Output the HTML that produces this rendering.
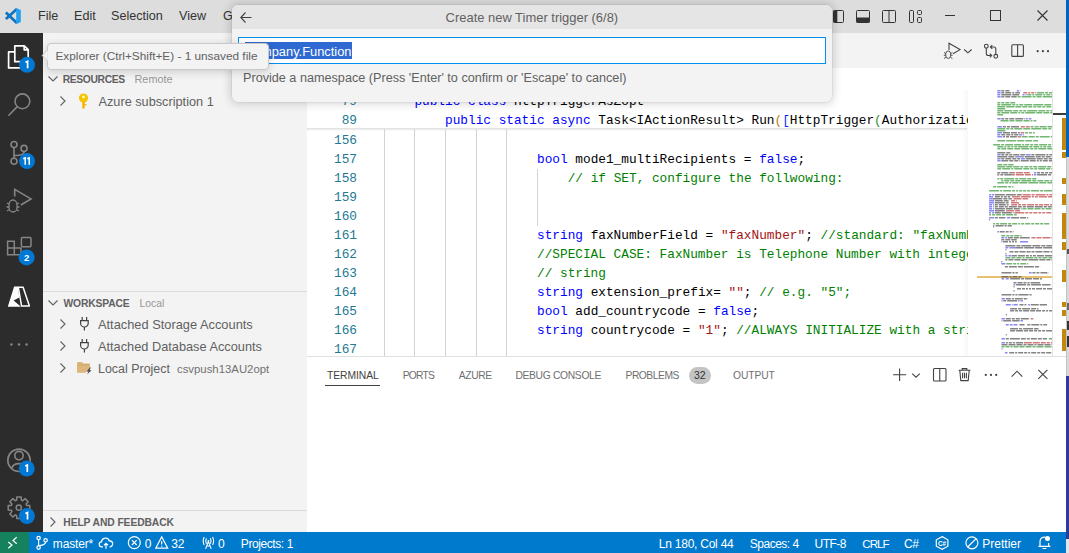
<!DOCTYPE html>
<html><head><meta charset="utf-8">
<style>
*{box-sizing:border-box;margin:0;padding:0}
html,body{width:1069px;height:553px;overflow:hidden;background:#c9c9c9;font-family:"Liberation Sans",sans-serif}
.a{position:absolute}
#win{position:absolute;left:0;top:0;width:1066px;height:553px;overflow:hidden;background:#fff}
#title{left:0;top:0;width:1066px;height:33px;background:#dddddd}
.menu{top:9px;font-size:12.6px;color:#333;white-space:pre}
#act{left:0;top:33px;width:43px;height:499px;background:#2c2c2c}
#side{left:43px;top:33px;width:264px;height:499px;background:#f3f3f3}
#edtitle{left:307px;top:33px;width:759px;height:35px;background:#f3f3f3}
#editor{left:307px;top:68px;width:759px;height:288px;background:#fff;overflow:hidden}
#panel{left:307px;top:356px;width:759px;height:176px;background:#fff;border-top:1px solid #e0e0e0}
#status{left:0;top:532px;width:1066px;height:21px;background:#007acc;color:#fff}
.code{position:absolute;font-family:"Liberation Mono",monospace;font-size:12.78px;white-space:pre;line-height:19px;height:19px;color:#000}
.ln{color:#237893;text-align:right;width:50px;left:0}
.k{color:#0000ff}.s{color:#a31515}.c{color:#008000}
.guide{position:absolute;width:1px;background:#d3d3d3}
.hdr{font-size:10.3px;font-weight:bold;color:#616161;white-space:pre}
.sub{font-size:10.4px;color:#979797;white-space:pre}
.item{font-size:12.78px;color:#616161;white-space:pre}
.badge{position:absolute;width:16px;height:16px;border-radius:8px;background:#0078d4;color:#fff;font-size:10px;font-weight:bold;text-align:center;line-height:16px;letter-spacing:-0.5px}
.tab{top:370px;font-size:10.3px;color:#6f6f6f;white-space:pre}
.st{top:4.7px;font-size:12px;color:#fff;white-space:pre}
svg{position:absolute;overflow:visible}
</style></head><body>
<!-- desktop strip on right -->
<div class="a" style="left:1066px;top:0;width:3px;height:157px;background:#0063c3"></div>
<div class="a" style="left:1066px;top:157px;width:3px;height:219px;background:#dadada;border-left:1px solid #c2c2c2"></div>
<div class="a" style="left:1067px;top:249px;width:2px;height:5px;background:#555"></div>
<div class="a" style="left:1067px;top:303px;width:2px;height:7px;background:#666"></div>
<div class="a" style="left:1067px;top:321px;width:2px;height:9px;background:#333"></div>
<div class="a" style="left:1067px;top:336px;width:2px;height:11px;background:#333"></div>
<div class="a" style="left:1066px;top:376px;width:3px;height:162.5px;background:#2e3a9e"></div>
<div class="a" style="left:1066px;top:538.5px;width:3px;height:14.5px;background:#e6e6e6"></div>
<div id="win">
 <!-- title bar -->
 <div id="title" class="a">
  <svg style="left:0;top:0" width="26" height="30">
   <path d="M5.9 12.6 L16.9 23.1 M16.9 8.9 L5.9 19" stroke="#0c75c2" stroke-width="2.7" fill="none"/>
   <path d="M16.2 7.9 L20.8 10 V22.1 L16.2 24.2 Z" fill="#23a0f0"/>
  </svg>
  <div class="a menu" style="left:38px">File</div>
  <div class="a menu" style="left:74px">Edit</div>
  <div class="a menu" style="left:111px">Selection</div>
  <div class="a menu" style="left:179px">View</div>
  <div class="a menu" style="left:223px">Go</div>
  <svg style="left:833px;top:10px" width="12" height="13"><rect x="0.5" y="0.5" width="10" height="12" rx="1" fill="none" stroke="#333"/><rect x="0.5" y="0.5" width="3.8" height="12" fill="#333"/></svg>
  <svg style="left:856px;top:10px" width="14" height="13"><rect x="0.5" y="0.5" width="13" height="12" rx="1" fill="none" stroke="#333"/><rect x="0.5" y="7.5" width="13" height="5" fill="#333"/></svg>
  <svg style="left:882px;top:10px" width="14" height="13"><rect x="0.5" y="0.5" width="13" height="12" rx="1" fill="none" stroke="#333"/><line x1="7" y1="0.5" x2="7" y2="12.5" stroke="#333"/></svg>
  <svg style="left:909px;top:10px" width="14" height="13"><rect x="0.5" y="0.5" width="4" height="12" rx="1" fill="none" stroke="#333"/><rect x="8.5" y="0.5" width="4" height="4" rx="1" fill="none" stroke="#333"/><rect x="8.5" y="7.5" width="4" height="5" rx="1" fill="none" stroke="#333"/></svg>
  <svg style="left:945px;top:15px" width="10" height="2"><line x1="0" y1="0.5" x2="10" y2="0.5" stroke="#333"/></svg>
  <svg style="left:990px;top:10px" width="11" height="11"><rect x="0.5" y="0.5" width="10" height="10" fill="none" stroke="#333"/></svg>
  <svg style="left:1037px;top:10px" width="11" height="11"><path d="M0.5 0.5 L10.5 10.5 M10.5 0.5 L0.5 10.5" stroke="#333" stroke-width="1.1"/></svg>
 </div>

 <!-- activity bar -->
 <div id="act" class="a"></div>
 <svg style="left:0;top:0" width="43" height="553">
  <g fill="none" stroke="#fff" stroke-width="1.7" stroke-linejoin="round">
   <path d="M14.8 45.8 H24.3 L28.2 49.7 V61.7 H14.8 Z"/>
   <path d="M24.2 45.8 V49.8 H28.2"/>
   <path d="M14.5 51.9 H8.6 V67.9 H22"/>
  </g>
  <g fill="none" stroke="#858585" stroke-width="1.6">
   <circle cx="22.4" cy="101.3" r="7.4"/>
   <path d="M17.2 106.6 L8.4 115.8"/>
   <circle cx="14" cy="144.5" r="3"/>
   <circle cx="14" cy="161.2" r="3"/>
   <circle cx="24" cy="148.4" r="3"/>
   <path d="M14 147.5 V158.2 M24 151.4 C24 155 21 155.3 14 155.6"/>
   <path d="M14.7 196.5 V189.4 L31 198.9 L20.8 205"/>
   <path d="M9 204.5 a4 4.5 0 0 1 8 0 v3 a4 4.5 0 0 1 -8 0 z M7 203 l2.5 1.5 M19 203 l-2.5 1.5 M6.5 207 h2.5 M17 207 h2.5 M7 211 l2.5 -1.5 M19 211 l-2.5 -1.5" stroke-width="1.3"/>
   <path d="M7.6 241.3 H14.3 V254.8 H7.6 Z M7.6 248 H21 V254.8 H14.3" stroke-width="1.5"/>
   <rect x="21.4" y="237.4" width="9.6" height="9.4" rx="1" stroke-width="1.5"/>
   <circle cx="19" cy="460.3" r="11.2"/>
   <circle cx="19" cy="455.6" r="4.2"/>
   <path d="M11.4 468.5 C12.8 464.8 15.5 463.6 19 463.6 C22.5 463.6 25.2 464.8 26.6 468.5"/>
  </g>
  <path fill="#fff" d="M14.1 286.6 H17.9 L19.3 297.6 L13.6 300.5 L21 306.8 H7.8 Z"/><path fill="none" stroke="#fff" stroke-width="1.5" stroke-linejoin="round" d="M18.3 287.3 H23.1 L29.4 306.1 H21.6 Z"/>
  <g fill="#858585"><circle cx="11.4" cy="344.5" r="1.3"/><circle cx="19" cy="344.5" r="1.3"/><circle cx="26.6" cy="344.5" r="1.3"/></g>
  <path fill="none" stroke="#858585" stroke-width="1.5" stroke-linejoin="round" d="M16.64 500.16 L16.81 497.02 L21.19 497.02 L21.36 500.16 L22.73 500.72 L25.08 498.63 L28.17 501.72 L26.08 504.07 L26.64 505.44 L29.78 505.61 L29.78 509.99 L26.64 510.16 L26.08 511.53 L28.17 513.88 L25.08 516.97 L22.73 514.88 L21.36 515.44 L21.19 518.58 L16.81 518.58 L16.64 515.44 L15.27 514.88 L12.92 516.97 L9.83 513.88 L11.92 511.53 L11.36 510.16 L8.22 509.99 L8.22 505.61 L11.36 505.44 L11.92 504.07 L9.83 501.72 L12.92 498.63 L15.27 500.72 Z"/>
  <circle cx="18.8" cy="507.7" r="2.6" fill="none" stroke="#858585" stroke-width="1.5"/>
 </svg>
 <svg style="left:0;top:0" width="43" height="553">
  <g fill="#0078d4"><circle cx="27" cy="64.8" r="8"/><circle cx="27" cy="161.1" r="8"/><circle cx="26.6" cy="257.4" r="8"/><circle cx="26.7" cy="468.5" r="8"/><circle cx="26.9" cy="516" r="8"/></g>
  <g fill="none" stroke="#fff" stroke-width="1.7">
   <path d="M25.5 62.2 L27.6 61.3 V68.3"/>
   <path d="M23.2 158.7 L25.2 157.8 V164.8 M27.2 158.7 L29.2 157.8 V164.8" stroke-width="1.5"/>
   <path d="M25.2 466 L27.3 465.1 V472.1"/>
   <path d="M25.4 513.5 L27.5 512.6 V519.6"/>
  </g>
  <text x="26.6" y="260.8" font-size="9.6" font-weight="bold" fill="#fff" text-anchor="middle" font-family="Liberation Sans">2</text>
 </svg>
 <!-- sidebar -->
 <div id="side" class="a">
  <svg style="left:5.3px;top:43.2px" width="11" height="6"><path d="M0.5 0.5 L5 5 L9.5 0.5" fill="none" stroke="#616161" stroke-width="1.1"/></svg>
  <div class="a hdr" style="left:19.8px;top:41px;letter-spacing:-0.37px">RESOURCES</div>
  <div class="a sub" style="left:91.5px;top:39.8px;font-size:10.9px">Remote</div>
  <svg style="left:17px;top:63.3px" width="6" height="10"><path d="M0.5 0.5 L5 5 L0.5 9.5" fill="none" stroke="#616161" stroke-width="1.1"/></svg>
  <svg style="left:35px;top:59.5px" width="11" height="16" viewBox="0 0 11 16"><circle cx="5.5" cy="5" r="4.6" fill="#f5c400"/><circle cx="5.5" cy="4" r="1.4" fill="#fff6c0"/><path d="M4.3 8.5 H6.7 V15 L5.5 16 L4.3 15 Z" fill="#f5b000"/><rect x="6.5" y="11" width="2" height="1.3" fill="#f5b000"/></svg>
  <div class="a item" style="left:55.5px;top:61px;font-size:12.73px">Azure subscription 1</div>

  <div class="a" style="left:0;top:258px;width:264px;height:1px;background:#dcdcdc"></div>
  <svg style="left:5.3px;top:267.2px" width="11" height="6"><path d="M0.5 0.5 L5 5 L9.5 0.5" fill="none" stroke="#616161" stroke-width="1.1"/></svg>
  <div class="a hdr" style="left:20.5px;top:264.8px;letter-spacing:-0.15px">WORKSPACE</div>
  <div class="a sub" style="left:96.5px;top:264.8px">Local</div>
  <svg style="left:17px;top:285.7px" width="6" height="10"><path d="M0.5 0.5 L5 5 L0.5 9.5" fill="none" stroke="#616161" stroke-width="1.1"/></svg>
  <svg style="left:36.7px;top:284px" width="9" height="14"><path d="M2.2 0 V3.6 M6.6 0 V3.6 M0.6 3.6 H8.2 V6.2 A3.8 3.8 0 0 1 0.6 6.2 Z M4.4 10 V13.5" fill="none" stroke="#424242" stroke-width="1.2"/></svg>
  <div class="a item" style="left:55px;top:284px;font-size:12.83px">Attached Storage Accounts</div>
  <svg style="left:17px;top:307.7px" width="6" height="10"><path d="M0.5 0.5 L5 5 L0.5 9.5" fill="none" stroke="#616161" stroke-width="1.1"/></svg>
  <svg style="left:36.7px;top:306px" width="9" height="14"><path d="M2.2 0 V3.6 M6.6 0 V3.6 M0.6 3.6 H8.2 V6.2 A3.8 3.8 0 0 1 0.6 6.2 Z M4.4 10 V13.5" fill="none" stroke="#424242" stroke-width="1.2"/></svg>
  <div class="a item" style="left:55px;top:306px;font-size:12.78px">Attached Database Accounts</div>
  <svg style="left:17px;top:329.7px" width="6" height="10"><path d="M0.5 0.5 L5 5 L0.5 9.5" fill="none" stroke="#616161" stroke-width="1.1"/></svg>
  <svg style="left:33.8px;top:329.1px" width="16" height="14"><path d="M0 0.9 Q0 0 0.9 0 H5 L6.4 1.4 H12.1 Q13 1.4 13 2.3 V5.8 L8.6 10.7 H0 Z" fill="#dcb67a"/><path d="M0.3 2.9 H12.7" stroke="#c8a265" stroke-width="0.7"/><path d="M12.9 5.6 L9.6 9.5 H11.7 L10.1 12.6 L14.5 8.2 H12.3 L13.9 5.6 Z" fill="#3c3c3c"/></svg>
  <div class="a item" style="left:55px;top:328.7px;font-size:12.44px">Local Project</div>
  <div class="a" style="left:134px;top:329.7px;font-size:11.36px;color:#717171;white-space:pre">csvpush13AU2opt</div>

  <div class="a" style="left:0;top:477px;width:264px;height:1px;background:#dcdcdc"></div>
  <svg style="left:7px;top:483.6px" width="6" height="10"><path d="M0.5 0.5 L5 5 L0.5 9.5" fill="none" stroke="#616161" stroke-width="1.1"/></svg>
  <div class="a hdr" style="left:20.3px;top:484px;letter-spacing:-0.09px">HELP AND FEEDBACK</div>
 </div>

 <!-- editor title -->
 <div id="edtitle" class="a">
  <svg style="left:0;top:0" width="759" height="35">
   <g fill="none" stroke="#424242" stroke-width="1.1" transform="translate(-307,-33)">
    <path d="M949 50 V43.3 L960 49.6 L953 53.8"/>
    <path d="M945.8 53.6 a2.4 2.6 0 0 1 4.8 0 v2.2 a2.4 2.6 0 0 1 -4.8 0 z M944 52.5 l1.8 1.2 M952.4 52.5 l-1.8 1.2 M943.8 55.3 h2 M950.6 55.3 h2 M944 58.5 l1.8 -1.2 M952.4 58.5 l-1.8 -1.2" stroke-width="0.9"/>
    <path d="M964.2 49.5 L967.9 52.8 L971.6 49.5"/>
    <circle cx="986.3" cy="46.2" r="1.9"/><circle cx="995.8" cy="56.3" r="1.9"/>
    <path d="M986.3 48.1 V53.5 Q986.3 55.5 988.3 55.5 H991.5 M989.8 53.6 L991.7 55.5 L989.8 57.4"/>
    <path d="M995.8 54.4 V49 Q995.8 47 993.8 47 H990.6 M992.3 45.1 L990.4 47 L992.3 48.9"/>
    <rect x="1011.8" y="44.8" width="11.6" height="11.6" rx="1"/><path d="M1017.6 44.8 V56.4"/>
   </g>
   <g fill="#424242"><circle cx="730.7" cy="18.2" r="1.1"/><circle cx="735.9" cy="18.2" r="1.1"/><circle cx="741" cy="18.2" r="1.1"/></g>
  </svg>
 </div>

 <!-- editor -->
 <div id="editor" class="a">
  <div class="a" style="left:0;top:0;width:660.5px;height:288px;overflow:hidden">
   <!-- guides -->
   <div class="guide" style="left:76.5px;top:61px;height:227px"></div>
   <div class="guide" style="left:107.2px;top:61px;height:227px"></div>
   <div class="guide" style="left:137.8px;top:61px;height:227px"></div>
   <div class="guide" style="left:168.5px;top:61px;height:227px"></div>
   <div class="guide" style="left:199.2px;top:61px;height:227px"></div>
   <div class="guide" style="left:229.9px;top:101px;height:57px"></div>

   <div class="code ln" style="top:63px">156</div>
   <div class="code ln" style="top:82px">157</div>
   <div class="code ln" style="top:101px">158</div>
   <div class="code ln" style="top:120px">159</div>
   <div class="code ln" style="top:139px">160</div>
   <div class="code ln" style="top:158px">161</div>
   <div class="code ln" style="top:177px">162</div>
   <div class="code ln" style="top:196px">163</div>
   <div class="code ln" style="top:215px">164</div>
   <div class="code ln" style="top:234px">165</div>
   <div class="code ln" style="top:253px">166</div>
   <div class="code ln" style="top:272px">167</div>

   <div class="code" style="left:230px;top:82px"><span class="k">bool</span> mode1_multiRecipients = <span class="k">false</span>;</div>
   <div class="code c" style="left:260.7px;top:101px">// if SET, configure the follwowing:</div>
   <div class="code" style="left:230px;top:158px"><span class="k">string</span> faxNumberField = <span class="s">"faxNumber"</span>; <span class="c">//standard: "faxNumber"</span></div>
   <div class="code c" style="left:230px;top:177px">//SPECIAL CASE: FaxNumber is Telephone Number with integer</div>
   <div class="code c" style="left:230px;top:196px">// string</div>
   <div class="code" style="left:230px;top:215px"><span class="k">string</span> extension_prefix= <span class="s">""</span>; <span class="c">// e.g. "5";</span></div>
   <div class="code" style="left:230px;top:234px"><span class="k">bool</span> add_countrycode = <span class="k">false</span>;</div>
   <div class="code" style="left:230px;top:253px"><span class="k">string</span> countrycode = <span class="s">"1"</span>; <span class="c">//ALWAYS INITIALIZE with a string</span></div>

   <!-- sticky scroll -->
   <div class="a" style="left:0;top:22px;width:660px;height:38px;background:#fff"></div>
   <div class="a" style="left:0;top:60px;width:660px;height:3px;background:linear-gradient(#dddddd,rgba(221,221,221,0))"></div>
   <div class="code ln" style="top:24px">79</div>
   <div class="code ln" style="top:43px">89</div>
   <div class="code" style="left:107.4px;top:24px"><span class="k">public</span> <span class="k">class</span> HttpTriggerAsZopt</div>
   <div class="code" style="left:138px;top:43px"><span class="k">public</span> <span class="k">static</span> <span class="k">async</span> Task&lt;IActionResult&gt; Run<span style="color:#b8860b">(</span><span style="color:#0431fa">[</span>HttpTrigger<span style="color:#319331">(</span>Authorization</div>
  </div>
  <!-- minimap -->
  <div class="a" style="left:654.5px;top:22px;width:6px;height:266px;background:linear-gradient(90deg,rgba(0,0,0,0),rgba(0,0,0,0.03))"></div>
  <div class="a" style="left:660.5px;top:0;width:85px;height:288px;background:#fff;overflow:hidden">
  <svg style="left:0;top:0" width="86" height="288"><rect x="9" y="208" width="76" height="2" fill="#e8c070"/><g opacity="0.72"><rect x="29.3" y="22" width="3.3" height="1.5" fill="#5c5cf5"/><rect x="33.3" y="22" width="3.0" height="1.5" fill="#555555"/><rect x="37.3" y="22" width="4.1" height="1.5" fill="#555555"/><rect x="48.8" y="22" width="2.0" height="1.5" fill="#5c5cf5"/><rect x="51.8" y="22" width="0.6" height="1.5" fill="#5c5cf5"/><rect x="29.3" y="24" width="3.3" height="1.5" fill="#5c5cf5"/><rect x="33.3" y="24" width="3.0" height="1.5" fill="#555555"/><rect x="37.3" y="24" width="6.0" height="1.5" fill="#555555"/><rect x="44.3" y="24" width="2.0" height="1.5" fill="#555555"/><rect x="47.3" y="24" width="4.7" height="1.5" fill="#555555"/><rect x="55.3" y="24" width="4.0" height="1.5" fill="#c04848"/><rect x="60.3" y="24" width="2.0" height="1.5" fill="#c04848"/><rect x="63.3" y="24" width="3.0" height="1.5" fill="#c04848"/><rect x="67.3" y="24" width="1.0" height="1.5" fill="#c04848"/><rect x="69.1" y="24" width="7.0" height="1.5" fill="#3f9a3f"/><rect x="77.1" y="24" width="3.0" height="1.5" fill="#3f9a3f"/><rect x="81.1" y="24" width="3.4" height="1.5" fill="#3f9a3f"/><rect x="29.3" y="26" width="3.0" height="1.5" fill="#5c5cf5"/><rect x="33.3" y="26" width="10.0" height="1.5" fill="#555555"/><rect x="44.3" y="26" width="7.0" height="1.5" fill="#555555"/><rect x="54.5" y="26" width="2.0" height="1.5" fill="#5c5cf5"/><rect x="57.5" y="26" width="1.1" height="1.5" fill="#5c5cf5"/><rect x="59.3" y="26" width="4.0" height="1.5" fill="#3f9a3f"/><rect x="64.3" y="26" width="2.0" height="1.5" fill="#3f9a3f"/><rect x="67.3" y="26" width="7.0" height="1.5" fill="#3f9a3f"/><rect x="75.3" y="26" width="2.0" height="1.5" fill="#3f9a3f"/><rect x="78.3" y="26" width="4.0" height="1.5" fill="#3f9a3f"/><rect x="83.3" y="26" width="1.2" height="1.5" fill="#3f9a3f"/><rect x="29.3" y="28" width="3.3" height="1.5" fill="#5c5cf5"/><rect x="33.3" y="28" width="3.0" height="1.5" fill="#555555"/><rect x="37.3" y="28" width="5.0" height="1.5" fill="#555555"/><rect x="43.3" y="28" width="5.4" height="1.5" fill="#555555"/><rect x="49.6" y="28" width="3.0" height="1.5" fill="#3f9a3f"/><rect x="53.6" y="28" width="10.0" height="1.5" fill="#3f9a3f"/><rect x="64.6" y="28" width="3.0" height="1.5" fill="#3f9a3f"/><rect x="68.6" y="28" width="5.0" height="1.5" fill="#3f9a3f"/><rect x="74.6" y="28" width="10.0" height="1.5" fill="#3f9a3f"/><rect x="29.3" y="34" width="3.0" height="1.5" fill="#3f9a3f"/><rect x="33.3" y="34" width="3.0" height="1.5" fill="#3f9a3f"/><rect x="37.3" y="34" width="4.0" height="1.5" fill="#3f9a3f"/><rect x="42.3" y="34" width="4.9" height="1.5" fill="#3f9a3f"/><rect x="29.3" y="36" width="3.0" height="1.5" fill="#3f9a3f"/><rect x="33.3" y="36" width="10.0" height="1.5" fill="#3f9a3f"/><rect x="44.3" y="36" width="3.0" height="1.5" fill="#3f9a3f"/><rect x="48.3" y="36" width="2.0" height="1.5" fill="#3f9a3f"/><rect x="51.3" y="36" width="4.0" height="1.5" fill="#3f9a3f"/><rect x="56.3" y="36" width="8.0" height="1.5" fill="#3f9a3f"/><rect x="65.3" y="36" width="10.0" height="1.5" fill="#3f9a3f"/><rect x="76.3" y="36" width="7.0" height="1.5" fill="#3f9a3f"/><rect x="84.3" y="36" width="0.3" height="1.5" fill="#3f9a3f"/><rect x="29.3" y="38" width="8.0" height="1.5" fill="#3f9a3f"/><rect x="38.3" y="38" width="8.0" height="1.5" fill="#3f9a3f"/><rect x="47.3" y="38" width="6.0" height="1.5" fill="#3f9a3f"/><rect x="54.3" y="38" width="5.0" height="1.5" fill="#3f9a3f"/><rect x="60.3" y="38" width="4.0" height="1.5" fill="#3f9a3f"/><rect x="65.3" y="38" width="3.0" height="1.5" fill="#3f9a3f"/><rect x="69.3" y="38" width="4.0" height="1.5" fill="#3f9a3f"/><rect x="74.3" y="38" width="3.0" height="1.5" fill="#3f9a3f"/><rect x="78.3" y="38" width="5.0" height="1.5" fill="#3f9a3f"/><rect x="84.3" y="38" width="0.3" height="1.5" fill="#3f9a3f"/><rect x="29.3" y="40" width="8.0" height="1.5" fill="#3f9a3f"/><rect x="29.3" y="42" width="6.0" height="1.5" fill="#3f9a3f"/><rect x="36.3" y="42" width="8.0" height="1.5" fill="#3f9a3f"/><rect x="45.3" y="42" width="5.0" height="1.5" fill="#3f9a3f"/><rect x="51.3" y="42" width="3.0" height="1.5" fill="#3f9a3f"/><rect x="55.3" y="42" width="3.0" height="1.5" fill="#3f9a3f"/><rect x="59.3" y="42" width="10.0" height="1.5" fill="#3f9a3f"/><rect x="70.3" y="42" width="7.0" height="1.5" fill="#3f9a3f"/><rect x="78.3" y="42" width="3.0" height="1.5" fill="#3f9a3f"/><rect x="82.3" y="42" width="2.3" height="1.5" fill="#3f9a3f"/><rect x="29.3" y="44" width="3.0" height="1.5" fill="#3f9a3f"/><rect x="33.3" y="44" width="8.0" height="1.5" fill="#3f9a3f"/><rect x="42.3" y="44" width="7.0" height="1.5" fill="#3f9a3f"/><rect x="50.3" y="44" width="2.0" height="1.5" fill="#3f9a3f"/><rect x="53.3" y="44" width="3.0" height="1.5" fill="#3f9a3f"/><rect x="57.3" y="44" width="10.0" height="1.5" fill="#3f9a3f"/><rect x="68.3" y="44" width="6.0" height="1.5" fill="#3f9a3f"/><rect x="75.3" y="44" width="6.0" height="1.5" fill="#3f9a3f"/><rect x="82.3" y="44" width="2.3" height="1.5" fill="#3f9a3f"/><rect x="29.3" y="46" width="5.7" height="1.5" fill="#3f9a3f"/><rect x="29.3" y="50" width="3.3" height="1.5" fill="#5c5cf5"/><rect x="33.3" y="50" width="3.0" height="1.5" fill="#555555"/><rect x="37.3" y="50" width="3.0" height="1.5" fill="#555555"/><rect x="41.3" y="50" width="5.0" height="1.5" fill="#555555"/><rect x="47.3" y="50" width="8.0" height="1.5" fill="#555555"/><rect x="56.3" y="50" width="0.6" height="1.5" fill="#555555"/><rect x="57.7" y="50" width="2.0" height="1.5" fill="#5c5cf5"/><rect x="60.7" y="50" width="2.7" height="1.5" fill="#5c5cf5"/><rect x="32.5" y="52" width="8.0" height="1.5" fill="#3f9a3f"/><rect x="41.5" y="52" width="5.0" height="1.5" fill="#3f9a3f"/><rect x="47.5" y="52" width="7.0" height="1.5" fill="#3f9a3f"/><rect x="55.5" y="52" width="6.0" height="1.5" fill="#3f9a3f"/><rect x="62.5" y="52" width="2.0" height="1.5" fill="#3f9a3f"/><rect x="65.5" y="52" width="2.8" height="1.5" fill="#3f9a3f"/><rect x="29.3" y="58" width="4.9" height="1.5" fill="#5c5cf5"/><rect x="35.0" y="58" width="3.0" height="1.5" fill="#555555"/><rect x="39.0" y="58" width="3.0" height="1.5" fill="#555555"/><rect x="43.0" y="58" width="8.0" height="1.5" fill="#555555"/><rect x="52.0" y="58" width="0.1" height="1.5" fill="#555555"/><rect x="52.8" y="58" width="4.0" height="1.5" fill="#c04848"/><rect x="57.8" y="58" width="3.9" height="1.5" fill="#c04848"/><rect x="62.6" y="58" width="3.0" height="1.5" fill="#3f9a3f"/><rect x="66.6" y="58" width="4.0" height="1.5" fill="#3f9a3f"/><rect x="71.6" y="58" width="7.0" height="1.5" fill="#3f9a3f"/><rect x="79.6" y="58" width="5.0" height="1.5" fill="#3f9a3f"/><rect x="29.3" y="60" width="8.0" height="1.5" fill="#3f9a3f"/><rect x="38.3" y="60" width="3.0" height="1.5" fill="#3f9a3f"/><rect x="42.3" y="60" width="3.0" height="1.5" fill="#3f9a3f"/><rect x="46.3" y="60" width="8.0" height="1.5" fill="#3f9a3f"/><rect x="55.3" y="60" width="7.0" height="1.5" fill="#3f9a3f"/><rect x="63.3" y="60" width="10.0" height="1.5" fill="#3f9a3f"/><rect x="74.3" y="60" width="5.0" height="1.5" fill="#3f9a3f"/><rect x="80.3" y="60" width="3.0" height="1.5" fill="#3f9a3f"/><rect x="84.3" y="60" width="0.3" height="1.5" fill="#3f9a3f"/><rect x="29.3" y="62" width="8.1" height="1.5" fill="#3f9a3f"/><rect x="29.3" y="64" width="4.9" height="1.5" fill="#5c5cf5"/><rect x="35.0" y="64" width="7.0" height="1.5" fill="#555555"/><rect x="43.0" y="64" width="6.0" height="1.5" fill="#555555"/><rect x="50.0" y="64" width="2.1" height="1.5" fill="#555555"/><rect x="52.8" y="64" width="3.3" height="1.5" fill="#c04848"/><rect x="56.9" y="64" width="3.0" height="1.5" fill="#3f9a3f"/><rect x="60.9" y="64" width="3.0" height="1.5" fill="#3f9a3f"/><rect x="64.9" y="64" width="1.8" height="1.5" fill="#3f9a3f"/><rect x="29.3" y="66" width="3.0" height="1.5" fill="#5c5cf5"/><rect x="33.3" y="66" width="4.0" height="1.5" fill="#555555"/><rect x="38.3" y="66" width="4.0" height="1.5" fill="#555555"/><rect x="43.3" y="66" width="2.0" height="1.5" fill="#555555"/><rect x="46.3" y="66" width="4.1" height="1.5" fill="#555555"/><rect x="51.2" y="66" width="3.0" height="1.5" fill="#5c5cf5"/><rect x="55.2" y="66" width="0.9" height="1.5" fill="#5c5cf5"/><rect x="29.3" y="68" width="4.9" height="1.5" fill="#5c5cf5"/><rect x="35.0" y="68" width="2.0" height="1.5" fill="#555555"/><rect x="38.0" y="68" width="3.0" height="1.5" fill="#555555"/><rect x="42.0" y="68" width="6.8" height="1.5" fill="#555555"/><rect x="49.6" y="68" width="3.3" height="1.5" fill="#c04848"/><rect x="53.7" y="68" width="6.0" height="1.5" fill="#3f9a3f"/><rect x="60.7" y="68" width="6.0" height="1.5" fill="#3f9a3f"/><rect x="67.7" y="68" width="3.0" height="1.5" fill="#3f9a3f"/><rect x="71.7" y="68" width="10.0" height="1.5" fill="#3f9a3f"/><rect x="82.7" y="68" width="1.9" height="1.5" fill="#3f9a3f"/><rect x="29.3" y="72" width="8.0" height="1.5" fill="#3f9a3f"/><rect x="38.3" y="72" width="10.0" height="1.5" fill="#3f9a3f"/><rect x="49.3" y="72" width="7.0" height="1.5" fill="#3f9a3f"/><rect x="57.3" y="72" width="7.0" height="1.5" fill="#3f9a3f"/><rect x="65.3" y="72" width="4.7" height="1.5" fill="#3f9a3f"/><rect x="25.2" y="76" width="7.0" height="1.5" fill="#3f9a3f"/><rect x="33.2" y="76" width="3.0" height="1.5" fill="#3f9a3f"/><rect x="37.2" y="76" width="8.0" height="1.5" fill="#3f9a3f"/><rect x="46.2" y="76" width="7.0" height="1.5" fill="#3f9a3f"/><rect x="54.2" y="76" width="2.0" height="1.5" fill="#3f9a3f"/><rect x="57.2" y="76" width="4.0" height="1.5" fill="#3f9a3f"/><rect x="62.2" y="76" width="3.0" height="1.5" fill="#3f9a3f"/><rect x="66.2" y="76" width="4.0" height="1.5" fill="#3f9a3f"/><rect x="71.2" y="76" width="8.0" height="1.5" fill="#3f9a3f"/><rect x="80.2" y="76" width="3.0" height="1.5" fill="#3f9a3f"/><rect x="84.2" y="76" width="0.3" height="1.5" fill="#3f9a3f"/><rect x="29.3" y="78" width="6.0" height="1.5" fill="#3f9a3f"/><rect x="36.3" y="78" width="2.0" height="1.5" fill="#3f9a3f"/><rect x="39.3" y="78" width="3.0" height="1.5" fill="#3f9a3f"/><rect x="43.3" y="78" width="2.0" height="1.5" fill="#3f9a3f"/><rect x="46.3" y="78" width="3.0" height="1.5" fill="#3f9a3f"/><rect x="50.3" y="78" width="10.0" height="1.5" fill="#3f9a3f"/><rect x="61.3" y="78" width="3.0" height="1.5" fill="#3f9a3f"/><rect x="65.3" y="78" width="6.0" height="1.5" fill="#3f9a3f"/><rect x="72.3" y="78" width="2.0" height="1.5" fill="#3f9a3f"/><rect x="75.3" y="78" width="3.0" height="1.5" fill="#3f9a3f"/><rect x="79.3" y="78" width="4.0" height="1.5" fill="#3f9a3f"/><rect x="84.3" y="78" width="0.3" height="1.5" fill="#3f9a3f"/><rect x="29.3" y="80" width="3.0" height="1.5" fill="#3f9a3f"/><rect x="33.3" y="80" width="5.0" height="1.5" fill="#3f9a3f"/><rect x="39.3" y="80" width="6.0" height="1.5" fill="#3f9a3f"/><rect x="46.3" y="80" width="6.0" height="1.5" fill="#3f9a3f"/><rect x="53.3" y="80" width="8.0" height="1.5" fill="#3f9a3f"/><rect x="62.3" y="80" width="3.0" height="1.5" fill="#3f9a3f"/><rect x="66.3" y="80" width="3.0" height="1.5" fill="#3f9a3f"/><rect x="70.3" y="80" width="8.0" height="1.5" fill="#3f9a3f"/><rect x="79.3" y="80" width="5.3" height="1.5" fill="#3f9a3f"/><rect x="29.3" y="84" width="8.0" height="1.5" fill="#555555"/><rect x="38.3" y="84" width="4.0" height="1.5" fill="#555555"/><rect x="29.3" y="86" width="3.3" height="1.5" fill="#5c5cf5"/><rect x="33.3" y="86" width="3.0" height="1.5" fill="#555555"/><rect x="37.3" y="86" width="3.0" height="1.5" fill="#555555"/><rect x="41.3" y="86" width="3.0" height="1.5" fill="#555555"/><rect x="45.3" y="86" width="6.0" height="1.5" fill="#555555"/><rect x="52.3" y="86" width="4.6" height="1.5" fill="#555555"/><rect x="57.7" y="86" width="4.9" height="1.5" fill="#5c5cf5"/><rect x="63.4" y="86" width="3.0" height="1.5" fill="#555555"/><rect x="67.4" y="86" width="10.0" height="1.5" fill="#555555"/><rect x="78.4" y="86" width="2.0" height="1.5" fill="#555555"/><rect x="81.4" y="86" width="3.1" height="1.5" fill="#555555"/><rect x="29.3" y="88" width="10.0" height="1.5" fill="#555555"/><rect x="40.3" y="88" width="6.0" height="1.5" fill="#555555"/><rect x="47.3" y="88" width="1.5" height="1.5" fill="#555555"/><rect x="48.8" y="88" width="4.9" height="1.5" fill="#5c5cf5"/><rect x="53.7" y="88" width="2.0" height="1.5" fill="#555555"/><rect x="56.7" y="88" width="10.0" height="1.5" fill="#555555"/><rect x="67.7" y="88" width="5.0" height="1.5" fill="#555555"/><rect x="73.7" y="88" width="3.0" height="1.5" fill="#555555"/><rect x="77.7" y="88" width="5.0" height="1.5" fill="#555555"/><rect x="83.7" y="88" width="0.9" height="1.5" fill="#555555"/><rect x="29.3" y="90" width="3.3" height="1.5" fill="#5c5cf5"/><rect x="33.3" y="90" width="3.0" height="1.5" fill="#555555"/><rect x="37.3" y="90" width="6.0" height="1.5" fill="#555555"/><rect x="44.3" y="90" width="4.0" height="1.5" fill="#555555"/><rect x="49.3" y="90" width="2.7" height="1.5" fill="#555555"/><rect x="52.8" y="90" width="4.1" height="1.5" fill="#5c5cf5"/><rect x="57.7" y="90" width="10.0" height="1.5" fill="#555555"/><rect x="68.7" y="90" width="6.0" height="1.5" fill="#555555"/><rect x="75.7" y="90" width="4.0" height="1.5" fill="#555555"/><rect x="80.7" y="90" width="3.8" height="1.5" fill="#555555"/><rect x="29.3" y="92" width="3.3" height="1.5" fill="#5c5cf5"/><rect x="33.3" y="92" width="7.0" height="1.5" fill="#555555"/><rect x="41.3" y="92" width="4.0" height="1.5" fill="#555555"/><rect x="46.3" y="92" width="4.0" height="1.5" fill="#555555"/><rect x="51.3" y="92" width="0.7" height="1.5" fill="#555555"/><rect x="52.8" y="92" width="8.0" height="1.5" fill="#555555"/><rect x="61.8" y="92" width="6.0" height="1.5" fill="#555555"/><rect x="68.8" y="92" width="2.0" height="1.5" fill="#555555"/><rect x="71.8" y="92" width="2.0" height="1.5" fill="#555555"/><rect x="74.8" y="92" width="5.0" height="1.5" fill="#555555"/><rect x="80.8" y="92" width="3.7" height="1.5" fill="#555555"/><rect x="29.3" y="96" width="5.0" height="1.5" fill="#3f9a3f"/><rect x="35.3" y="96" width="4.0" height="1.5" fill="#3f9a3f"/><rect x="40.3" y="96" width="5.3" height="1.5" fill="#3f9a3f"/><rect x="29.3" y="98" width="8.0" height="1.5" fill="#3f9a3f"/><rect x="38.3" y="98" width="6.0" height="1.5" fill="#3f9a3f"/><rect x="45.3" y="98" width="6.0" height="1.5" fill="#3f9a3f"/><rect x="52.3" y="98" width="3.0" height="1.5" fill="#3f9a3f"/><rect x="56.3" y="98" width="4.0" height="1.5" fill="#3f9a3f"/><rect x="61.3" y="98" width="3.0" height="1.5" fill="#3f9a3f"/><rect x="65.3" y="98" width="4.0" height="1.5" fill="#3f9a3f"/><rect x="70.3" y="98" width="8.0" height="1.5" fill="#3f9a3f"/><rect x="79.3" y="98" width="4.0" height="1.5" fill="#3f9a3f"/><rect x="84.3" y="98" width="0.3" height="1.5" fill="#3f9a3f"/><rect x="29.3" y="100" width="4.0" height="1.5" fill="#3f9a3f"/><rect x="34.3" y="100" width="8.0" height="1.5" fill="#3f9a3f"/><rect x="43.3" y="100" width="2.0" height="1.5" fill="#3f9a3f"/><rect x="46.3" y="100" width="8.0" height="1.5" fill="#3f9a3f"/><rect x="55.3" y="100" width="6.0" height="1.5" fill="#3f9a3f"/><rect x="62.3" y="100" width="3.0" height="1.5" fill="#3f9a3f"/><rect x="66.3" y="100" width="3.0" height="1.5" fill="#3f9a3f"/><rect x="70.3" y="100" width="7.0" height="1.5" fill="#3f9a3f"/><rect x="78.3" y="100" width="4.0" height="1.5" fill="#3f9a3f"/><rect x="83.3" y="100" width="1.3" height="1.5" fill="#3f9a3f"/><rect x="29.3" y="104" width="3.0" height="1.5" fill="#555555"/><rect x="33.3" y="104" width="7.0" height="1.5" fill="#555555"/><rect x="41.3" y="104" width="2.6" height="1.5" fill="#555555"/><rect x="43.9" y="104" width="3.0" height="1.5" fill="#c04848"/><rect x="47.9" y="104" width="7.0" height="1.5" fill="#c04848"/><rect x="55.9" y="104" width="5.9" height="1.5" fill="#c04848"/><rect x="65.9" y="104" width="2.4" height="1.5" fill="#5c5cf5"/><rect x="69.1" y="104" width="3.0" height="1.5" fill="#555555"/><rect x="73.1" y="104" width="3.0" height="1.5" fill="#555555"/><rect x="77.1" y="104" width="3.0" height="1.5" fill="#555555"/><rect x="81.1" y="104" width="3.0" height="1.5" fill="#555555"/><rect x="29.3" y="106" width="2.0" height="1.5" fill="#555555"/><rect x="32.3" y="106" width="3.0" height="1.5" fill="#555555"/><rect x="36.3" y="106" width="7.6" height="1.5" fill="#555555"/><rect x="43.9" y="106" width="3.0" height="1.5" fill="#c04848"/><rect x="47.9" y="106" width="8.0" height="1.5" fill="#c04848"/><rect x="56.9" y="106" width="6.0" height="1.5" fill="#c04848"/><rect x="63.9" y="106" width="1.1" height="1.5" fill="#c04848"/><rect x="65.9" y="106" width="2.4" height="1.5" fill="#5c5cf5"/><rect x="69.1" y="106" width="10.0" height="1.5" fill="#555555"/><rect x="80.1" y="106" width="3.0" height="1.5" fill="#555555"/><rect x="84.1" y="106" width="0.4" height="1.5" fill="#555555"/><rect x="29.3" y="110" width="2.0" height="1.5" fill="#3f9a3f"/><rect x="32.3" y="110" width="3.0" height="1.5" fill="#3f9a3f"/><rect x="36.3" y="110" width="10.0" height="1.5" fill="#3f9a3f"/><rect x="47.3" y="110" width="3.0" height="1.5" fill="#3f9a3f"/><rect x="51.3" y="110" width="7.0" height="1.5" fill="#3f9a3f"/><rect x="59.3" y="110" width="4.0" height="1.5" fill="#3f9a3f"/><rect x="64.3" y="110" width="4.0" height="1.5" fill="#3f9a3f"/><rect x="33.3" y="112" width="2.0" height="1.5" fill="#3f9a3f"/><rect x="36.3" y="112" width="5.0" height="1.5" fill="#3f9a3f"/><rect x="42.3" y="112" width="4.0" height="1.5" fill="#3f9a3f"/><rect x="47.3" y="112" width="5.0" height="1.5" fill="#3f9a3f"/><rect x="53.3" y="112" width="10.0" height="1.5" fill="#3f9a3f"/><rect x="64.3" y="112" width="4.0" height="1.5" fill="#3f9a3f"/><rect x="69.3" y="112" width="6.0" height="1.5" fill="#3f9a3f"/><rect x="76.3" y="112" width="5.0" height="1.5" fill="#3f9a3f"/><rect x="82.3" y="112" width="2.2" height="1.5" fill="#3f9a3f"/><rect x="29.3" y="114" width="7.0" height="1.5" fill="#3f9a3f"/><rect x="37.3" y="114" width="3.0" height="1.5" fill="#3f9a3f"/><rect x="41.3" y="114" width="2.0" height="1.5" fill="#3f9a3f"/><rect x="44.3" y="114" width="6.0" height="1.5" fill="#3f9a3f"/><rect x="51.3" y="114" width="8.0" height="1.5" fill="#3f9a3f"/><rect x="60.3" y="114" width="10.0" height="1.5" fill="#3f9a3f"/><rect x="71.3" y="114" width="7.0" height="1.5" fill="#3f9a3f"/><rect x="79.3" y="114" width="5.3" height="1.5" fill="#3f9a3f"/><rect x="25.2" y="118" width="3.0" height="1.5" fill="#3f9a3f"/><rect x="29.2" y="118" width="10.0" height="1.5" fill="#3f9a3f"/><rect x="40.2" y="118" width="3.0" height="1.5" fill="#3f9a3f"/><rect x="44.2" y="118" width="1.3" height="1.5" fill="#3f9a3f"/><rect x="21.1" y="122" width="10.0" height="1.5" fill="#3f9a3f"/><rect x="32.1" y="122" width="2.0" height="1.5" fill="#3f9a3f"/><rect x="35.1" y="122" width="8.0" height="1.5" fill="#3f9a3f"/><rect x="44.1" y="122" width="3.0" height="1.5" fill="#3f9a3f"/><rect x="48.1" y="122" width="2.0" height="1.5" fill="#3f9a3f"/><rect x="51.1" y="122" width="3.0" height="1.5" fill="#3f9a3f"/><rect x="55.1" y="122" width="3.0" height="1.5" fill="#3f9a3f"/><rect x="59.1" y="122" width="3.0" height="1.5" fill="#3f9a3f"/><rect x="63.1" y="122" width="8.0" height="1.5" fill="#3f9a3f"/><rect x="72.1" y="122" width="3.0" height="1.5" fill="#3f9a3f"/><rect x="76.1" y="122" width="8.4" height="1.5" fill="#3f9a3f"/><rect x="21.1" y="126" width="2.0" height="1.5" fill="#5c5cf5"/><rect x="24.1" y="126" width="1.9" height="1.5" fill="#5c5cf5"/><rect x="26.8" y="126" width="10.0" height="1.5" fill="#555555"/><rect x="37.8" y="126" width="10.0" height="1.5" fill="#555555"/><rect x="48.8" y="126" width="4.8" height="1.5" fill="#555555"/><rect x="54.5" y="126" width="8.0" height="1.5" fill="#c04848"/><rect x="63.5" y="126" width="3.0" height="1.5" fill="#c04848"/><rect x="67.5" y="126" width="10.0" height="1.5" fill="#c04848"/><rect x="78.5" y="126" width="2.0" height="1.5" fill="#c04848"/><rect x="81.5" y="126" width="3.1" height="1.5" fill="#c04848"/><rect x="21.1" y="128" width="4.0" height="1.5" fill="#5c5cf5"/><rect x="26.8" y="128" width="5.0" height="1.5" fill="#555555"/><rect x="32.8" y="128" width="2.0" height="1.5" fill="#555555"/><rect x="35.8" y="128" width="3.0" height="1.5" fill="#555555"/><rect x="39.8" y="128" width="2.4" height="1.5" fill="#555555"/><rect x="43.9" y="128" width="8.0" height="1.5" fill="#c04848"/><rect x="52.9" y="128" width="10.0" height="1.5" fill="#c04848"/><rect x="63.9" y="128" width="2.0" height="1.5" fill="#c04848"/><rect x="66.9" y="128" width="3.0" height="1.5" fill="#c04848"/><rect x="70.9" y="128" width="8.0" height="1.5" fill="#c04848"/><rect x="79.9" y="128" width="4.7" height="1.5" fill="#c04848"/><rect x="21.1" y="130" width="3.3" height="1.5" fill="#5c5cf5"/><rect x="24.4" y="130" width="10.0" height="1.5" fill="#555555"/><rect x="35.4" y="130" width="4.0" height="1.5" fill="#555555"/><rect x="40.4" y="130" width="3.5" height="1.5" fill="#555555"/><rect x="45.5" y="130" width="8.0" height="1.5" fill="#c04848"/><rect x="54.5" y="130" width="5.6" height="1.5" fill="#c04848"/><rect x="21.1" y="132" width="4.9" height="1.5" fill="#5c5cf5"/><rect x="26.8" y="132" width="8.0" height="1.5" fill="#555555"/><rect x="35.8" y="132" width="4.8" height="1.5" fill="#555555"/><rect x="43.1" y="132" width="4.0" height="1.5" fill="#c04848"/><rect x="48.1" y="132" width="0.7" height="1.5" fill="#c04848"/><rect x="21.1" y="134" width="4.9" height="1.5" fill="#5c5cf5"/><rect x="26.8" y="134" width="10.0" height="1.5" fill="#555555"/><rect x="37.8" y="134" width="2.8" height="1.5" fill="#555555"/><rect x="43.1" y="134" width="8.0" height="1.5" fill="#c04848"/><rect x="21.1" y="136" width="3.0" height="1.5" fill="#5c5cf5"/><rect x="25.1" y="136" width="0.9" height="1.5" fill="#5c5cf5"/><rect x="26.8" y="136" width="3.0" height="1.5" fill="#555555"/><rect x="30.8" y="136" width="7.0" height="1.5" fill="#555555"/><rect x="38.8" y="136" width="1.8" height="1.5" fill="#555555"/><rect x="43.1" y="136" width="6.0" height="1.5" fill="#c04848"/><rect x="50.1" y="136" width="3.0" height="1.5" fill="#c04848"/><rect x="54.1" y="136" width="4.0" height="1.5" fill="#c04848"/><rect x="59.1" y="136" width="7.0" height="1.5" fill="#c04848"/><rect x="67.1" y="136" width="3.0" height="1.5" fill="#c04848"/><rect x="71.1" y="136" width="4.0" height="1.5" fill="#c04848"/><rect x="76.1" y="136" width="5.0" height="1.5" fill="#c04848"/><rect x="82.1" y="136" width="2.5" height="1.5" fill="#c04848"/><rect x="21.1" y="138" width="3.0" height="1.5" fill="#5c5cf5"/><rect x="25.1" y="138" width="0.9" height="1.5" fill="#5c5cf5"/><rect x="26.8" y="138" width="3.0" height="1.5" fill="#555555"/><rect x="30.8" y="138" width="5.0" height="1.5" fill="#555555"/><rect x="36.8" y="138" width="3.0" height="1.5" fill="#555555"/><rect x="40.8" y="138" width="8.0" height="1.5" fill="#555555"/><rect x="49.8" y="138" width="4.0" height="1.5" fill="#555555"/><rect x="54.8" y="138" width="3.0" height="1.5" fill="#555555"/><rect x="58.8" y="138" width="7.0" height="1.5" fill="#555555"/><rect x="66.8" y="138" width="8.0" height="1.5" fill="#555555"/><rect x="75.8" y="138" width="3.0" height="1.5" fill="#555555"/><rect x="79.8" y="138" width="4.0" height="1.5" fill="#555555"/><rect x="21.1" y="140" width="3.0" height="1.5" fill="#5c5cf5"/><rect x="25.1" y="140" width="0.9" height="1.5" fill="#5c5cf5"/><rect x="26.8" y="140" width="10.0" height="1.5" fill="#555555"/><rect x="37.8" y="140" width="7.0" height="1.5" fill="#555555"/><rect x="45.8" y="140" width="6.0" height="1.5" fill="#555555"/><rect x="52.8" y="140" width="0.8" height="1.5" fill="#555555"/><rect x="54.5" y="140" width="4.0" height="1.5" fill="#3f9a3f"/><rect x="59.5" y="140" width="6.0" height="1.5" fill="#3f9a3f"/><rect x="66.5" y="140" width="6.0" height="1.5" fill="#3f9a3f"/><rect x="73.5" y="140" width="3.0" height="1.5" fill="#3f9a3f"/><rect x="77.5" y="140" width="6.0" height="1.5" fill="#3f9a3f"/><rect x="84.5" y="140" width="0.1" height="1.5" fill="#3f9a3f"/><rect x="21.1" y="142" width="4.9" height="1.5" fill="#5c5cf5"/><rect x="26.8" y="142" width="10.0" height="1.5" fill="#555555"/><rect x="38.2" y="142" width="8.0" height="1.5" fill="#c04848"/><rect x="47.2" y="142" width="4.8" height="1.5" fill="#c04848"/><rect x="21.1" y="144" width="2.0" height="1.5" fill="#5c5cf5"/><rect x="24.1" y="144" width="1.9" height="1.5" fill="#5c5cf5"/><rect x="26.8" y="144" width="6.0" height="1.5" fill="#555555"/><rect x="33.8" y="144" width="10.0" height="1.5" fill="#555555"/><rect x="44.8" y="144" width="0.7" height="1.5" fill="#555555"/><rect x="46.3" y="144" width="10.0" height="1.5" fill="#c04848"/><rect x="57.3" y="144" width="3.0" height="1.5" fill="#c04848"/><rect x="61.3" y="144" width="3.0" height="1.5" fill="#c04848"/><rect x="65.3" y="144" width="4.0" height="1.5" fill="#c04848"/><rect x="70.3" y="144" width="3.0" height="1.5" fill="#c04848"/><rect x="74.3" y="144" width="3.0" height="1.5" fill="#c04848"/><rect x="78.3" y="144" width="5.0" height="1.5" fill="#c04848"/><rect x="84.3" y="144" width="0.2" height="1.5" fill="#c04848"/><rect x="21.1" y="146" width="2.0" height="1.5" fill="#3f9a3f"/><rect x="24.1" y="146" width="3.0" height="1.5" fill="#3f9a3f"/><rect x="28.1" y="146" width="5.0" height="1.5" fill="#3f9a3f"/><rect x="34.1" y="146" width="3.0" height="1.5" fill="#3f9a3f"/><rect x="38.1" y="146" width="7.0" height="1.5" fill="#3f9a3f"/><rect x="46.1" y="146" width="2.6" height="1.5" fill="#3f9a3f"/><rect x="21.1" y="149" width="4.9" height="1.5" fill="#5c5cf5"/><rect x="26.8" y="149" width="3.0" height="1.5" fill="#555555"/><rect x="30.8" y="149" width="6.6" height="1.5" fill="#555555"/><rect x="39.0" y="149" width="3.3" height="1.5" fill="#5c5cf5"/><rect x="43.1" y="149" width="8.0" height="1.5" fill="#555555"/><rect x="52.1" y="149" width="6.0" height="1.5" fill="#555555"/><rect x="59.1" y="149" width="1.1" height="1.5" fill="#555555"/><rect x="21.1" y="151" width="1.0" height="1.5" fill="#555555"/><rect x="25.2" y="155" width="2.0" height="1.5" fill="#3f9a3f"/><rect x="28.2" y="155" width="3.0" height="1.5" fill="#3f9a3f"/><rect x="32.2" y="155" width="7.0" height="1.5" fill="#3f9a3f"/><rect x="40.2" y="155" width="3.0" height="1.5" fill="#3f9a3f"/><rect x="44.2" y="155" width="5.0" height="1.5" fill="#3f9a3f"/><rect x="50.2" y="155" width="2.0" height="1.5" fill="#3f9a3f"/><rect x="53.2" y="155" width="3.0" height="1.5" fill="#3f9a3f"/><rect x="57.2" y="155" width="5.0" height="1.5" fill="#3f9a3f"/><rect x="63.2" y="155" width="3.0" height="1.5" fill="#3f9a3f"/><rect x="67.2" y="155" width="4.0" height="1.5" fill="#3f9a3f"/><rect x="72.2" y="155" width="3.0" height="1.5" fill="#3f9a3f"/><rect x="76.2" y="155" width="5.0" height="1.5" fill="#3f9a3f"/><rect x="25.2" y="157" width="1.0" height="1.5" fill="#555555"/><rect x="27.6" y="157" width="8.0" height="1.5" fill="#555555"/><rect x="36.6" y="157" width="2.0" height="1.5" fill="#555555"/><rect x="39.6" y="157" width="4.3" height="1.5" fill="#555555"/><rect x="25.2" y="158" width="1.0" height="1.5" fill="#555555"/><rect x="29.3" y="163" width="1.6" height="1.5" fill="#5c5cf5"/><rect x="31.7" y="163" width="5.0" height="1.5" fill="#555555"/><rect x="37.7" y="163" width="3.0" height="1.5" fill="#555555"/><rect x="41.7" y="163" width="2.0" height="1.5" fill="#555555"/><rect x="44.7" y="163" width="0.8" height="1.5" fill="#555555"/><rect x="33.3" y="167" width="4.0" height="1.5" fill="#3f9a3f"/><rect x="38.3" y="167" width="3.0" height="1.5" fill="#3f9a3f"/><rect x="42.3" y="167" width="3.0" height="1.5" fill="#3f9a3f"/><rect x="46.3" y="167" width="5.0" height="1.5" fill="#3f9a3f"/><rect x="52.3" y="167" width="1.3" height="1.5" fill="#3f9a3f"/><rect x="33.3" y="169" width="3.0" height="1.5" fill="#5c5cf5"/><rect x="37.3" y="169" width="1.7" height="1.5" fill="#5c5cf5"/><rect x="39.8" y="169" width="5.0" height="1.5" fill="#555555"/><rect x="45.8" y="169" width="5.0" height="1.5" fill="#555555"/><rect x="51.8" y="169" width="10.0" height="1.5" fill="#555555"/><rect x="63.4" y="169" width="4.0" height="1.5" fill="#c04848"/><rect x="68.4" y="169" width="5.0" height="1.5" fill="#c04848"/><rect x="74.4" y="169" width="8.0" height="1.5" fill="#c04848"/><rect x="83.4" y="169" width="1.1" height="1.5" fill="#c04848"/><rect x="33.3" y="171" width="3.0" height="1.5" fill="#555555"/><rect x="37.3" y="171" width="5.0" height="1.5" fill="#555555"/><rect x="43.3" y="171" width="5.4" height="1.5" fill="#555555"/><rect x="33.3" y="173" width="1.0" height="1.5" fill="#5c5cf5"/><rect x="35.0" y="173" width="5.0" height="1.5" fill="#555555"/><rect x="41.0" y="173" width="2.0" height="1.5" fill="#555555"/><rect x="44.0" y="173" width="2.0" height="1.5" fill="#555555"/><rect x="47.0" y="173" width="1.8" height="1.5" fill="#555555"/><rect x="52.0" y="173" width="8.1" height="1.5" fill="#5c5cf5"/><rect x="37.4" y="177" width="10.0" height="1.5" fill="#555555"/><rect x="48.4" y="177" width="4.0" height="1.5" fill="#555555"/><rect x="53.4" y="177" width="10.0" height="1.5" fill="#555555"/><rect x="64.4" y="177" width="8.0" height="1.5" fill="#555555"/><rect x="73.4" y="177" width="4.0" height="1.5" fill="#555555"/><rect x="78.4" y="177" width="6.2" height="1.5" fill="#555555"/><rect x="37.4" y="179" width="3.0" height="1.5" fill="#5c5cf5"/><rect x="41.4" y="179" width="5.8" height="1.5" fill="#5c5cf5"/><rect x="47.2" y="179" width="8.0" height="1.5" fill="#555555"/><rect x="56.2" y="179" width="10.0" height="1.5" fill="#555555"/><rect x="67.2" y="179" width="7.0" height="1.5" fill="#555555"/><rect x="75.2" y="179" width="9.4" height="1.5" fill="#555555"/><rect x="37.4" y="181" width="1.0" height="1.5" fill="#555555"/><rect x="41.5" y="183" width="4.0" height="1.5" fill="#555555"/><rect x="46.5" y="183" width="4.0" height="1.5" fill="#555555"/><rect x="51.5" y="183" width="6.0" height="1.5" fill="#555555"/><rect x="58.5" y="183" width="4.0" height="1.5" fill="#555555"/><rect x="63.5" y="183" width="3.0" height="1.5" fill="#555555"/><rect x="67.5" y="183" width="7.0" height="1.5" fill="#555555"/><rect x="75.5" y="183" width="6.0" height="1.5" fill="#555555"/><rect x="82.5" y="183" width="2.0" height="1.5" fill="#555555"/><rect x="37.4" y="185" width="1.0" height="1.5" fill="#555555"/><rect x="37.4" y="187" width="2.0" height="1.5" fill="#5c5cf5"/><rect x="40.4" y="187" width="3.0" height="1.5" fill="#5c5cf5"/><rect x="43.9" y="187" width="5.0" height="1.5" fill="#555555"/><rect x="49.9" y="187" width="7.0" height="1.5" fill="#555555"/><rect x="57.9" y="187" width="3.0" height="1.5" fill="#555555"/><rect x="61.9" y="187" width="2.0" height="1.5" fill="#555555"/><rect x="64.9" y="187" width="3.0" height="1.5" fill="#555555"/><rect x="68.9" y="187" width="7.0" height="1.5" fill="#555555"/><rect x="76.9" y="187" width="7.7" height="1.5" fill="#555555"/><rect x="37.4" y="189" width="5.0" height="1.5" fill="#3f9a3f"/><rect x="43.4" y="189" width="4.0" height="1.5" fill="#3f9a3f"/><rect x="48.4" y="189" width="5.0" height="1.5" fill="#3f9a3f"/><rect x="54.4" y="189" width="2.0" height="1.5" fill="#3f9a3f"/><rect x="57.4" y="189" width="8.0" height="1.5" fill="#3f9a3f"/><rect x="66.4" y="189" width="3.0" height="1.5" fill="#3f9a3f"/><rect x="70.4" y="189" width="3.0" height="1.5" fill="#3f9a3f"/><rect x="74.4" y="189" width="5.0" height="1.5" fill="#3f9a3f"/><rect x="80.4" y="189" width="4.2" height="1.5" fill="#3f9a3f"/><rect x="37.4" y="191" width="2.0" height="1.5" fill="#555555"/><rect x="40.4" y="191" width="5.0" height="1.5" fill="#555555"/><rect x="46.4" y="191" width="6.0" height="1.5" fill="#555555"/><rect x="53.4" y="191" width="6.0" height="1.5" fill="#555555"/><rect x="60.4" y="191" width="10.0" height="1.5" fill="#555555"/><rect x="71.4" y="191" width="6.0" height="1.5" fill="#555555"/><rect x="78.4" y="191" width="4.0" height="1.5" fill="#555555"/><rect x="83.4" y="191" width="1.2" height="1.5" fill="#555555"/><rect x="33.3" y="193" width="1.0" height="1.5" fill="#555555"/><rect x="33.3" y="195" width="4.0" height="1.5" fill="#5c5cf5"/><rect x="38.2" y="195" width="6.0" height="1.5" fill="#3f9a3f"/><rect x="45.2" y="195" width="3.0" height="1.5" fill="#3f9a3f"/><rect x="49.2" y="195" width="2.0" height="1.5" fill="#3f9a3f"/><rect x="52.2" y="195" width="6.0" height="1.5" fill="#3f9a3f"/><rect x="59.2" y="195" width="1.0" height="1.5" fill="#3f9a3f"/><rect x="36.9" y="198" width="3.0" height="1.5" fill="#555555"/><rect x="40.9" y="198" width="8.0" height="1.5" fill="#555555"/><rect x="49.9" y="198" width="5.0" height="1.5" fill="#555555"/><rect x="55.9" y="198" width="10.0" height="1.5" fill="#555555"/><rect x="66.9" y="198" width="4.0" height="1.5" fill="#555555"/><rect x="71.9" y="198" width="0.2" height="1.5" fill="#555555"/><rect x="33.5" y="204" width="10.0" height="1.5" fill="#555555"/><rect x="44.5" y="204" width="2.0" height="1.5" fill="#555555"/><rect x="47.5" y="204" width="2.3" height="1.5" fill="#555555"/><rect x="61.0" y="204" width="2.6" height="1.5" fill="#5c5cf5"/><rect x="64.4" y="204" width="3.0" height="1.5" fill="#555555"/><rect x="68.4" y="204" width="3.0" height="1.5" fill="#555555"/><rect x="72.4" y="204" width="7.0" height="1.5" fill="#555555"/><rect x="80.4" y="204" width="0.3" height="1.5" fill="#555555"/><rect x="33.5" y="208" width="7.0" height="1.5" fill="#555555"/><rect x="41.5" y="208" width="2.0" height="1.5" fill="#555555"/><rect x="44.5" y="208" width="5.0" height="1.5" fill="#555555"/><rect x="50.5" y="208" width="2.8" height="1.5" fill="#555555"/><rect x="33.5" y="210" width="2.6" height="1.5" fill="#5c5cf5"/><rect x="37.8" y="210" width="3.0" height="1.5" fill="#5c5cf5"/><rect x="42.1" y="210" width="10.0" height="1.5" fill="#555555"/><rect x="53.1" y="210" width="3.0" height="1.5" fill="#555555"/><rect x="57.1" y="210" width="7.0" height="1.5" fill="#555555"/><rect x="65.1" y="210" width="6.0" height="1.5" fill="#555555"/><rect x="72.1" y="210" width="1.8" height="1.5" fill="#555555"/><rect x="45.5" y="214" width="3.0" height="1.5" fill="#555555"/><rect x="49.5" y="214" width="5.0" height="1.5" fill="#555555"/><rect x="55.5" y="214" width="3.0" height="1.5" fill="#555555"/><rect x="59.5" y="214" width="2.0" height="1.5" fill="#555555"/><rect x="62.5" y="214" width="9.6" height="1.5" fill="#555555"/><rect x="45.5" y="216" width="1.7" height="1.5" fill="#5c5cf5"/><rect x="48.1" y="216" width="10.0" height="1.5" fill="#555555"/><rect x="59.1" y="216" width="3.0" height="1.5" fill="#555555"/><rect x="63.1" y="216" width="10.0" height="1.5" fill="#555555"/><rect x="74.1" y="216" width="8.4" height="1.5" fill="#555555"/><rect x="45.5" y="218" width="1.0" height="1.5" fill="#555555"/><rect x="49.0" y="220" width="4.0" height="1.5" fill="#555555"/><rect x="54.0" y="220" width="3.0" height="1.5" fill="#555555"/><rect x="58.0" y="220" width="2.0" height="1.5" fill="#555555"/><rect x="61.0" y="220" width="2.0" height="1.5" fill="#555555"/><rect x="64.0" y="220" width="3.0" height="1.5" fill="#555555"/><rect x="68.0" y="220" width="6.0" height="1.5" fill="#555555"/><rect x="75.0" y="220" width="3.0" height="1.5" fill="#555555"/><rect x="79.0" y="220" width="6.0" height="1.5" fill="#555555"/><rect x="45.5" y="222" width="1.0" height="1.5" fill="#555555"/><rect x="33.5" y="226" width="10.0" height="1.5" fill="#555555"/><rect x="44.5" y="226" width="2.0" height="1.5" fill="#555555"/><rect x="47.5" y="226" width="2.0" height="1.5" fill="#555555"/><rect x="50.5" y="226" width="10.0" height="1.5" fill="#555555"/><rect x="61.5" y="226" width="2.1" height="1.5" fill="#555555"/><rect x="33.5" y="230" width="3.4" height="1.5" fill="#5c5cf5"/><rect x="37.8" y="230" width="5.0" height="1.5" fill="#555555"/><rect x="43.8" y="230" width="2.0" height="1.5" fill="#555555"/><rect x="46.8" y="230" width="8.0" height="1.5" fill="#555555"/><rect x="55.8" y="230" width="3.0" height="1.5" fill="#555555"/><rect x="59.8" y="230" width="0.3" height="1.5" fill="#555555"/><rect x="33.5" y="232" width="0.9" height="1.5" fill="#5c5cf5"/><rect x="35.2" y="232" width="3.0" height="1.5" fill="#555555"/><rect x="39.2" y="232" width="10.0" height="1.5" fill="#555555"/><rect x="50.2" y="232" width="1.3" height="1.5" fill="#555555"/><rect x="52.4" y="232" width="2.6" height="1.5" fill="#5c5cf5"/><rect x="37.8" y="236" width="5.0" height="1.5" fill="#5c5cf5"/><rect x="43.8" y="236" width="0.9" height="1.5" fill="#5c5cf5"/><rect x="45.5" y="236" width="4.3" height="1.5" fill="#5c5cf5"/><rect x="51.5" y="236" width="4.0" height="1.5" fill="#555555"/><rect x="56.5" y="236" width="1.9" height="1.5" fill="#555555"/><rect x="60.1" y="236" width="1.7" height="1.5" fill="#5c5cf5"/><rect x="62.7" y="236" width="8.0" height="1.5" fill="#555555"/><rect x="71.7" y="236" width="7.3" height="1.5" fill="#555555"/><rect x="42.1" y="240" width="7.0" height="1.5" fill="#555555"/><rect x="50.1" y="240" width="3.0" height="1.5" fill="#555555"/><rect x="54.1" y="240" width="8.0" height="1.5" fill="#555555"/><rect x="63.1" y="240" width="5.0" height="1.5" fill="#555555"/><rect x="69.1" y="240" width="1.4" height="1.5" fill="#555555"/><rect x="42.1" y="242" width="4.0" height="1.5" fill="#555555"/><rect x="47.1" y="242" width="3.0" height="1.5" fill="#555555"/><rect x="51.1" y="242" width="3.0" height="1.5" fill="#555555"/><rect x="55.1" y="242" width="6.0" height="1.5" fill="#555555"/><rect x="62.1" y="242" width="5.0" height="1.5" fill="#555555"/><rect x="68.1" y="242" width="5.0" height="1.5" fill="#555555"/><rect x="74.1" y="242" width="3.0" height="1.5" fill="#555555"/><rect x="78.1" y="242" width="2.0" height="1.5" fill="#555555"/><rect x="81.1" y="242" width="3.9" height="1.5" fill="#555555"/><rect x="37.8" y="246" width="1.0" height="1.5" fill="#555555"/><rect x="33.5" y="250" width="3.4" height="1.5" fill="#5c5cf5"/><rect x="37.8" y="250" width="5.0" height="1.5" fill="#555555"/><rect x="43.8" y="250" width="3.0" height="1.5" fill="#555555"/><rect x="47.8" y="250" width="4.0" height="1.5" fill="#555555"/><rect x="52.8" y="250" width="8.0" height="1.5" fill="#555555"/><rect x="61.8" y="250" width="0.1" height="1.5" fill="#555555"/><rect x="62.7" y="250" width="2.6" height="1.5" fill="#c04848"/><rect x="33.5" y="252" width="0.9" height="1.5" fill="#5c5cf5"/><rect x="35.2" y="252" width="8.0" height="1.5" fill="#555555"/><rect x="44.2" y="252" width="7.3" height="1.5" fill="#555555"/><rect x="52.4" y="252" width="2.6" height="1.5" fill="#5c5cf5"/><rect x="37.8" y="256" width="3.0" height="1.5" fill="#5c5cf5"/><rect x="41.8" y="256" width="2.9" height="1.5" fill="#5c5cf5"/><rect x="45.5" y="256" width="4.0" height="1.5" fill="#5c5cf5"/><rect x="51.5" y="256" width="5.0" height="1.5" fill="#555555"/><rect x="59.3" y="256" width="3.0" height="1.5" fill="#555555"/><rect x="63.3" y="256" width="8.0" height="1.5" fill="#555555"/><rect x="72.3" y="256" width="2.0" height="1.5" fill="#555555"/><rect x="75.3" y="256" width="3.8" height="1.5" fill="#555555"/><rect x="42.1" y="260" width="8.0" height="1.5" fill="#555555"/><rect x="51.1" y="260" width="3.0" height="1.5" fill="#555555"/><rect x="55.1" y="260" width="10.0" height="1.5" fill="#555555"/><rect x="66.1" y="260" width="4.4" height="1.5" fill="#555555"/><rect x="42.1" y="262" width="5.0" height="1.5" fill="#555555"/><rect x="48.1" y="262" width="7.0" height="1.5" fill="#555555"/><rect x="56.1" y="262" width="4.0" height="1.5" fill="#555555"/><rect x="61.1" y="262" width="4.0" height="1.5" fill="#555555"/><rect x="66.1" y="262" width="3.0" height="1.5" fill="#555555"/><rect x="70.1" y="262" width="3.0" height="1.5" fill="#555555"/><rect x="74.1" y="262" width="3.0" height="1.5" fill="#555555"/><rect x="78.1" y="262" width="6.9" height="1.5" fill="#555555"/><rect x="37.8" y="266" width="1.0" height="1.5" fill="#555555"/><rect x="33.5" y="270" width="3.4" height="1.5" fill="#5c5cf5"/><rect x="37.8" y="270" width="3.0" height="1.5" fill="#555555"/><rect x="41.8" y="270" width="10.0" height="1.5" fill="#555555"/><rect x="52.8" y="270" width="5.0" height="1.5" fill="#555555"/><rect x="58.8" y="270" width="3.0" height="1.5" fill="#555555"/><rect x="62.8" y="270" width="6.0" height="1.5" fill="#555555"/><rect x="69.8" y="270" width="4.0" height="1.5" fill="#555555"/><rect x="74.8" y="270" width="4.2" height="1.5" fill="#555555"/><rect x="80.8" y="270" width="4.2" height="1.5" fill="#3f9a3f"/><rect x="33.5" y="274" width="3.4" height="1.5" fill="#5c5cf5"/><rect x="37.8" y="274" width="2.0" height="1.5" fill="#555555"/><rect x="40.8" y="274" width="3.0" height="1.5" fill="#555555"/><rect x="44.8" y="274" width="2.0" height="1.5" fill="#555555"/><rect x="47.8" y="274" width="7.2" height="1.5" fill="#555555"/><rect x="55.8" y="274" width="8.0" height="1.5" fill="#c04848"/><rect x="64.8" y="274" width="7.0" height="1.5" fill="#c04848"/><rect x="72.8" y="274" width="5.0" height="1.5" fill="#c04848"/><rect x="78.8" y="274" width="3.0" height="1.5" fill="#c04848"/><rect x="82.8" y="274" width="2.2" height="1.5" fill="#c04848"/><rect x="33.5" y="276" width="6.0" height="1.5" fill="#555555"/><rect x="40.5" y="276" width="7.0" height="1.5" fill="#555555"/><rect x="48.5" y="276" width="6.0" height="1.5" fill="#555555"/><rect x="55.5" y="276" width="3.0" height="1.5" fill="#555555"/><rect x="59.5" y="276" width="6.0" height="1.5" fill="#555555"/><rect x="66.5" y="276" width="2.0" height="1.5" fill="#555555"/><rect x="69.5" y="276" width="6.0" height="1.5" fill="#555555"/><rect x="76.5" y="276" width="6.0" height="1.5" fill="#555555"/><rect x="83.5" y="276" width="1.5" height="1.5" fill="#555555"/><rect x="33.5" y="278" width="3.0" height="1.5" fill="#3f9a3f"/><rect x="37.5" y="278" width="4.0" height="1.5" fill="#3f9a3f"/><rect x="42.5" y="278" width="2.0" height="1.5" fill="#3f9a3f"/><rect x="45.5" y="278" width="5.0" height="1.5" fill="#3f9a3f"/><rect x="51.5" y="278" width="5.0" height="1.5" fill="#3f9a3f"/><rect x="57.5" y="278" width="6.0" height="1.5" fill="#3f9a3f"/><rect x="64.5" y="278" width="3.0" height="1.5" fill="#3f9a3f"/><rect x="68.5" y="278" width="7.0" height="1.5" fill="#3f9a3f"/><rect x="76.5" y="278" width="7.0" height="1.5" fill="#3f9a3f"/><rect x="84.5" y="278" width="0.5" height="1.5" fill="#3f9a3f"/><rect x="33.5" y="280" width="1.0" height="1.5" fill="#5c5cf5"/><rect x="36.9" y="284" width="2.6" height="1.5" fill="#5c5cf5"/><rect x="41.2" y="284" width="5.0" height="1.5" fill="#555555"/><rect x="47.2" y="284" width="2.0" height="1.5" fill="#555555"/><rect x="50.2" y="284" width="5.0" height="1.5" fill="#555555"/><rect x="56.2" y="284" width="3.0" height="1.5" fill="#555555"/><rect x="60.2" y="284" width="2.0" height="1.5" fill="#555555"/><rect x="63.2" y="284" width="5.0" height="1.5" fill="#555555"/><rect x="69.2" y="284" width="3.0" height="1.5" fill="#555555"/><rect x="73.2" y="284" width="4.0" height="1.5" fill="#555555"/><rect x="78.2" y="284" width="5.0" height="1.5" fill="#555555"/><rect x="84.2" y="284" width="0.8" height="1.5" fill="#555555"/></g></svg>
  </div>
  <!-- overview ruler -->
  <div class="a" style="left:745.3px;top:22px;width:1px;height:266px;background:#e4e4e4"></div>
  <div class="a" style="left:746px;top:45px;width:13px;height:1.8px;background:#3c3c3c"></div>
  <div class="a" style="left:755px;top:50px;width:4px;height:31.5px;background:#c1870f"></div>
  <div class="a" style="left:755px;top:84px;width:4px;height:6.4px;background:#c1870f"></div>
  <div class="a" style="left:755px;top:110px;width:4px;height:5.7px;background:#c1870f"></div>
  <div class="a" style="left:755px;top:126px;width:4px;height:11.3px;background:#c1870f"></div>
  <div class="a" style="left:755px;top:144.8px;width:4px;height:26.2px;background:#c1870f"></div>
  <div class="a" style="left:755px;top:174.3px;width:4px;height:8.1px;background:#c1870f"></div>
  <div class="a" style="left:755px;top:202px;width:4px;height:12px;background:#c1870f"></div>
  <div class="a" style="left:755px;top:233.5px;width:4px;height:5.8px;background:#c1870f"></div>
  <div class="a" style="left:755px;top:241.9px;width:4px;height:6.3px;background:#c1870f"></div>
  <div class="a" style="left:755px;top:260.9px;width:4px;height:22.2px;background:#c1870f"></div>
 </div>

 <!-- panel -->
 <div id="panel" class="a"></div>
 <div class="a tab" style="left:327px;color:#424242;letter-spacing:-0.05px">TERMINAL</div>
 <div class="a" style="left:325px;top:385px;width:55px;height:1px;background:#424242"></div>
 <div class="a tab" style="left:402.7px;letter-spacing:-0.75px">PORTS</div>
 <div class="a tab" style="left:458.8px;letter-spacing:-0.4px">AZURE</div>
 <div class="a tab" style="left:515.4px;letter-spacing:-0.32px">DEBUG CONSOLE</div>
 <div class="a tab" style="left:625.5px;letter-spacing:-0.48px">PROBLEMS</div>
 <div class="a" style="left:688.5px;top:366.8px;width:22.5px;height:17px;border-radius:9px;background:#c4c4c4;color:#333;font-size:10.5px;text-align:center;line-height:17px">32</div>
 <div class="a tab" style="left:733px;letter-spacing:-0.1px">OUTPUT</div>
 <svg style="left:0;top:0" width="1066" height="553">
  <g fill="none" stroke="#424242" stroke-width="1.1">
   <path d="M893.1 374.7 H906.1 M899.6 368.4 V381"/>
   <path d="M912.2 373.6 L916 377.2 L919.8 373.6"/>
   <rect x="933.5" y="368.5" width="12.5" height="12.5" rx="1"/><path d="M939.75 368.5 V381"/>
   <path d="M958.6 370.3 H970.4 M962.2 370.3 V368.6 H966.8 V370.3 M959.8 370.3 L960.8 380.6 H968.2 L969.2 370.3 M962.6 372.8 V378.3 M964.5 372.8 V378.3 M966.4 372.8 V378.3"/>
   <path d="M1011.7 376.6 L1017 371.2 L1022.3 376.6"/>
   <path d="M1038.3 369.8 L1047.4 378.8 M1047.4 369.8 L1038.3 378.8"/>
  </g>
  <g fill="#424242"><circle cx="985.8" cy="374.9" r="1.1"/><circle cx="991" cy="374.9" r="1.1"/><circle cx="996.2" cy="374.9" r="1.1"/></g>
 </svg>

 <!-- status bar -->
 <div id="status" class="a">
  <div class="a" style="left:0;top:0;width:29px;height:21px;background:#16825d"></div>
  <svg style="left:0;top:0" width="1066" height="21">
   <g fill="none" stroke="#fff" stroke-width="1.2" transform="translate(0,-532)">
    <path d="M8.3 542 L12 545 L8.3 548.2 M16.7 537.3 L13 540.5 L16.7 543.7"/>
    <circle cx="38.6" cy="538" r="1.7"/><circle cx="38.6" cy="547.6" r="1.7"/><circle cx="45.6" cy="540.3" r="1.7"/>
    <path d="M38.6 539.7 V545.9 M45.6 542 Q45.6 545 39.5 545.6"/>
    <path d="M103 546.8 H101.9 A2.5 2.5 0 0 1 101.5 541.8 A4 4 0 0 1 109.3 541 A2.6 2.6 0 0 1 110.2 546.8 H109.6 M106 548.8 V543.4 M104 545.2 L106 543.3 L108 545.2"/>
    <circle cx="134.3" cy="542.6" r="6"/><path d="M131.9 540.2 L136.7 545 M136.7 540.2 L131.9 545"/>
    <path d="M161.7 536.8 L155.8 548.1 H167.7 Z M161.7 541 V544.6 M161.7 545.8 V546.8"/>
    <path d="M204.2 537 Q202.2 541 204.2 545 M206.4 538.3 Q205.1 541 206.4 543.7 M212.6 537 Q214.6 541 212.6 545 M210.4 538.3 Q211.7 541 210.4 543.7 M205.6 548.9 L208.4 541.6 L211.2 548.9 M206.6 546 H210.2" stroke-width="1.1"/><circle cx="208.4" cy="541" r="0.9" fill="#fff" stroke="none"/>
    <path d="M942.1 536.6 L947.9 539.8 V546.2 L942.1 549.4 L936.3 546.2 V539.8 Z" stroke-width="1.2"/>
    <circle cx="971.9" cy="542.8" r="6"/><path d="M967.7 547 L976.1 538.6"/>
    <path d="M1040 546 V541.5 A4.3 4.3 0 0 1 1046 537.5 M1038.4 546.3 H1050.4 M1042.5 548.5 H1046.3 M1048.6 546 V543" />
   </g>
   <circle cx="1047.5" cy="6.5" r="2.5" fill="#fff"/>
   <text x="937.9" y="13.6" font-size="6.3" font-weight="bold" fill="#fff" font-family="Liberation Sans">C#</text>
  </svg>
  <div class="a st" style="left:52.8px;letter-spacing:-0.16px">master*</div>
  <div class="a st" style="left:144.8px">0</div>
  <div class="a st" style="left:171.2px;letter-spacing:-0.2px">32</div>
  <div class="a st" style="left:218px">0</div>
  <div class="a st" style="left:240.8px;letter-spacing:-0.41px">Projects: 1</div>
  <div class="a st" style="left:658.8px;letter-spacing:-0.24px">Ln 180, Col 44</div>
  <div class="a st" style="left:749.8px;letter-spacing:-0.5px">Spaces: 4</div>
  <div class="a st" style="left:814.5px;letter-spacing:-0.5px">UTF-8</div>
  <div class="a st" style="left:862.3px;font-size:11.6px;letter-spacing:-1px">CRLF</div>
  <div class="a st" style="left:904px;letter-spacing:-0.45px">C#</div>
  <div class="a st" style="left:982.3px">Prettier</div>
 </div>

 <!-- quick input -->
 <div class="a" style="left:232px;top:5px;width:600px;height:96.8px;background:#f3f3f3;border-radius:6px;box-shadow:0 0 0 0.5px rgba(0,0,0,0.08),0 0 8px 2px rgba(0,0,0,0.16);overflow:hidden">
  <div class="a" style="left:0;top:0;width:600px;height:24px;background:#e5e5e5"></div>
  <svg style="left:7.5px;top:7.3px" width="12" height="11"><path d="M11.5 5.5 H1 M5.5 0.5 L0.8 5.5 L5.5 10.5" fill="none" stroke="#424242" stroke-width="1.1"/></svg>
  <div class="a" style="left:213.6px;top:5.1px;font-size:12.95px;color:#616161;white-space:pre">Create new Timer trigger (6/8)</div>
  <div class="a" style="left:6.3px;top:31.7px;width:587.7px;height:27.3px;background:#fff;border:1px solid #0090f1"></div>
  <div class="a" style="left:12.7px;top:37.2px;width:107px;height:16.4px;background:#2f69d2"></div>
  <div class="a" style="left:12.6px;top:38.7px;font-size:12.85px;color:#fff;white-space:pre">Company.Function</div>
  <div class="a" style="left:11px;top:65.7px;font-size:12.65px;color:#616161;white-space:pre">Provide a namespace (Press 'Enter' to confirm or 'Escape' to cancel)</div>
 </div>

 <!-- tooltip -->
 <div class="a" style="left:47px;top:43.4px;width:221.5px;height:26.4px;background:#f3f3f3;border:1px solid #c8c8c8;border-radius:4px;box-shadow:0 2px 8px rgba(0,0,0,0.16)"></div>
 <svg style="left:41px;top:50px" width="8" height="12"><path d="M6.5 0 L1.2 5.5 L6.5 11" fill="#f3f3f3" stroke="#c8c8c8"/><rect x="6.5" y="0.8" width="2" height="10" fill="#f3f3f3"/></svg>
 <div class="a" style="left:55.5px;top:48.7px;font-size:11.8px;color:#616161;white-space:pre">Explorer (Ctrl+Shift+E) - 1 unsaved file</div>
</div>
</body></html>
